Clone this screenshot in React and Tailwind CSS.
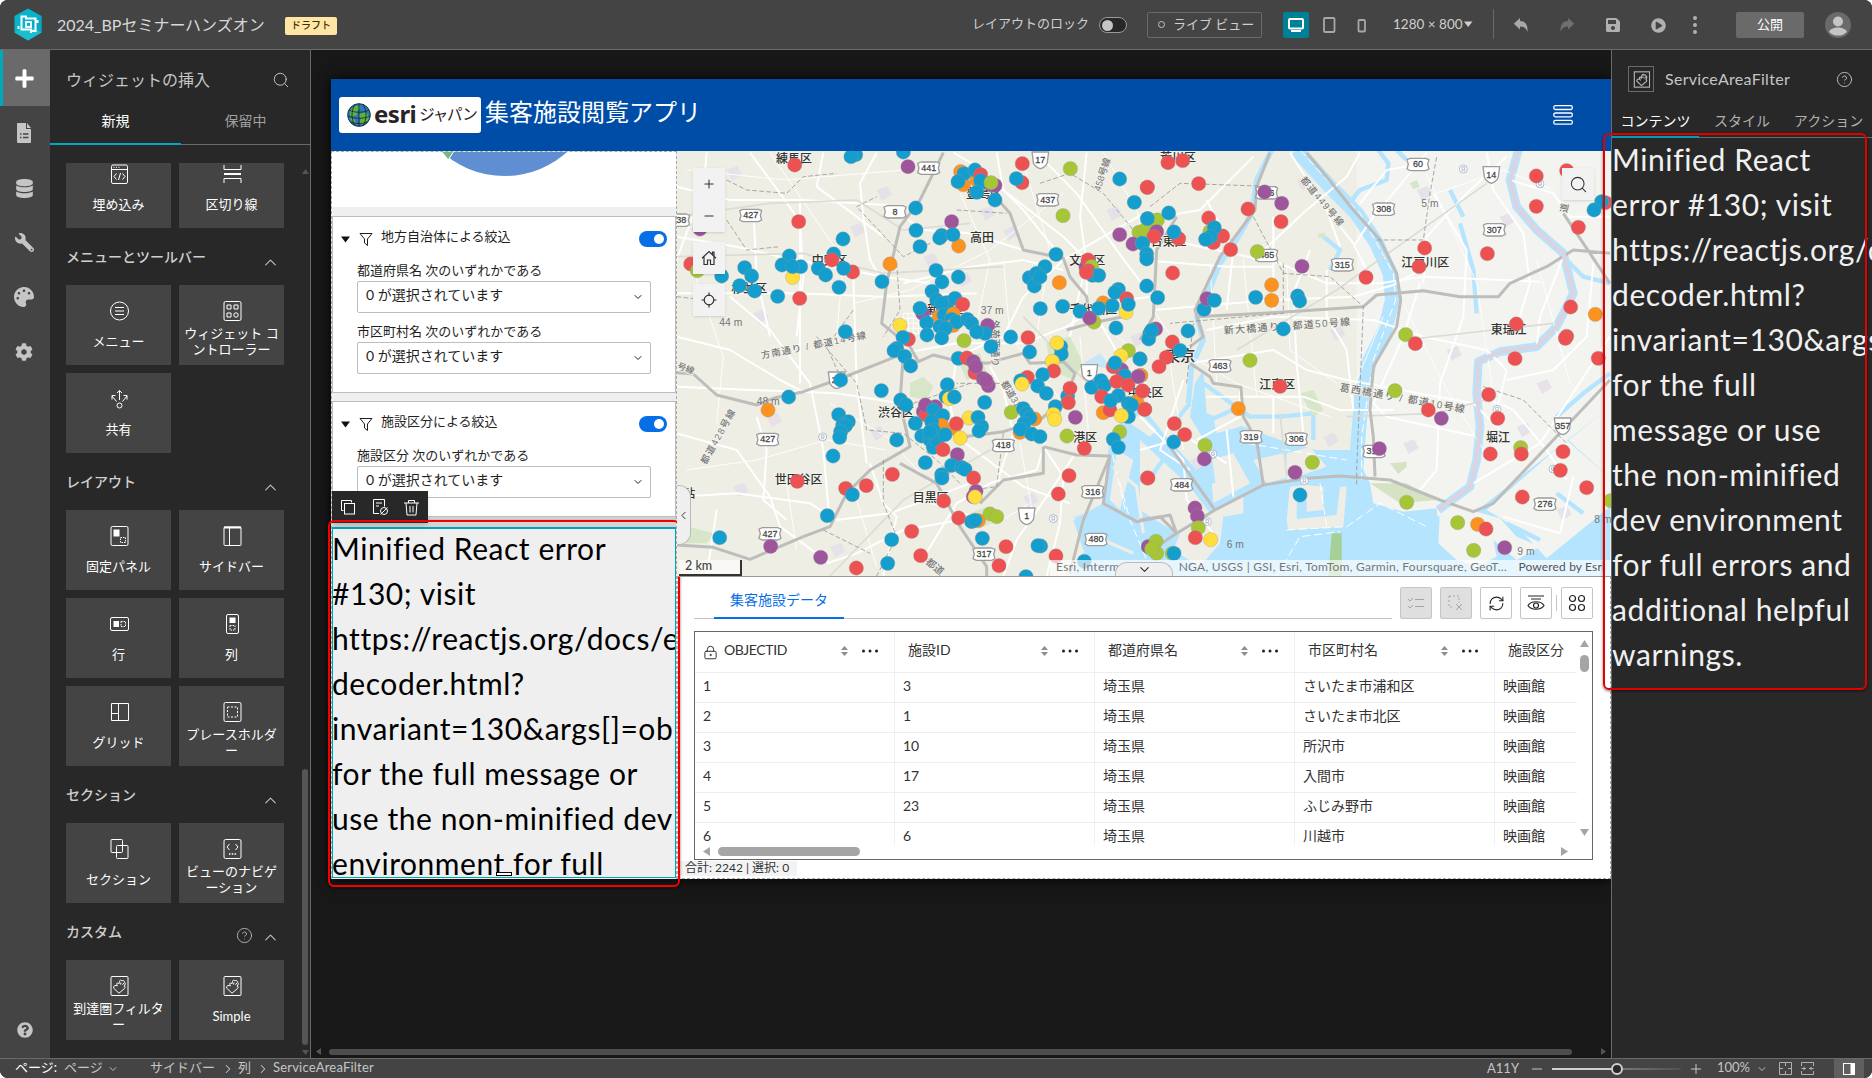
import React from "react";
import {
  Search, Plus, Minus, ChevronUp, ChevronDown, ChevronRight, ChevronLeft, CircleHelp, House, Locate,
  RefreshCw, LockKeyhole,
} from "lucide-react";
import { FaWrench, FaPalette, FaDatabase, FaCog, FaQuestionCircle, FaPlus, FaPlayCircle, FaSave } from "react-icons/fa";

/* ---------- shared icon helpers ---------- */
const Svg = ({ s = 20, className = "", children, sw = 1 }) => (
  <svg width={s} height={s} viewBox={`0 0 ${s} ${s}`} fill="none" stroke="currentColor" strokeWidth={sw} className={className}>{children}</svg>
);
const Hand = () => (
  <path d="M4.500 12L10 17.200L12 15.500L15.500 12.500C16.800 11.300 16 10 15 10.500C16.500 8.500 16.800 6.500 15.500 6.200C15.300 4.500 14 4 13 5C12.300 3.800 10.500 4 10.500 5.500L9.800 8C9 6.500 7.500 6.800 7.800 8.300L8.300 10C7 8.800 4.200 9.500 4.500 12zM11.500 8.500L12 6.500M13.500 8.800L15 6.800" />
);

const icons = {
  embed: <Svg><rect x="2.500" y="1" width="16" height="18.500" rx="1.500" /><path d="M2.500 5.500h16M4.500 3.300h1M7 3.300h1M9.500 3.300h1M7.500 9.500l-2.500 3 2.500 3M13.500 9.500l2.500 3-2.500 3M11.500 9l-2 7" /></Svg>,
  divider: <Svg><path d="M2 1v4.500h17V1M2 19v-4.500h17V19" /><path d="M2 10h17" strokeWidth="2" /></Svg>,
  menu: <Svg><circle cx="10.500" cy="10" r="9" /><path d="M6 6.500h9M6 10h9M6 13.500h9" /></Svg>,
  controller: <Svg><rect x="2" y=".5" width="17" height="19" rx="1.500" /><path d="M5 4h4v4H5zM12 4h4v4h-4zM5 12h4v4H5z" /><circle cx="14" cy="14" r="2.200" /></Svg>,
  share: <Svg><circle cx="10.500" cy="16.500" r="2.500" /><path d="M10.500 11V1.500M8 4l2.500-2.500L13 4M7.500 12.500L3 7M3 10.500V6.500h3.500M13.500 12.500L18 7M18 10.500V6.500h-3.500" /></Svg>,
  fixed: <Svg><rect x="2" y=".5" width="17" height="19" rx="1.500" /><rect x="5" y="4" width="5" height="6" fill="currentColor" /><rect x="11.500" y="11.500" width="5" height="5" strokeDasharray="1.500 1" /></Svg>,
  sidebar: <Svg><rect x="2" y="1" width="17" height="18.500" rx="1" /><path d="M2 1.500h17" strokeWidth="2" /><path d="M7.500 1v18" /></Svg>,
  row: <Svg><rect x="1.500" y="3.500" width="18" height="13" rx="1.500" /><rect x="5" y="7.500" width="4.500" height="5" fill="currentColor" /><rect x="12" y="7.500" width="4.500" height="5" strokeDasharray="1.500 1" /></Svg>,
  col: <Svg><rect x="4.500" y=".5" width="12" height="19" rx="1.500" /><rect x="8" y="4" width="5" height="4.500" fill="currentColor" /><rect x="8" y="11.500" width="5" height="4.500" strokeDasharray="1.500 1" /></Svg>,
  grid: <Svg><path d="M2.500 1.500h17v17h-17zM9.500 1.500v17M2.500 11.500h7" /></Svg>,
  placeholder: <Svg><rect x="2" y=".5" width="17" height="19" rx="1.500" /><rect x="5.500" y="5" width="10" height="10" strokeDasharray="2 1.500" /></Svg>,
  section: <Svg><rect x="2" y=".5" width="11.500" height="13" rx="1" /><rect x="7.500" y="6.500" width="11.500" height="13" rx="1" /></Svg>,
  viewnav: <Svg><rect x="2" y=".5" width="17" height="19" rx="1.500" /><path d="M7.500 5L5 8l2.500 3M13.500 5L16 8l-2.500 3" /><path d="M7 15h1.500M9.800 15h1.500M12.600 15h1.500" strokeWidth="1.500" /></Svg>,
  hand: <Svg><rect x="2" y=".5" width="17" height="19" rx="1" /><Hand /></Svg>,
};

const Logo = () => (
  <svg width="28" height="33" viewBox="0 0 28 33">
    <path d="M14 .5L27.500 8v16.500L14 32.500.5 24.500V8z" fill="#08b4cc" />
    <path d="M14 16.500L27.500 24.500 14 32.500.5 24.500z" fill="#2ac6cf" opacity=".55" />
    <path d="M27.500 8v16.500L14 16.500z" fill="#05a2c0" opacity=".7" />
    <path d="M11 8.500H7.500V21.500H17v3.500M12 7.500v3h9.500V23h-3.500M4.500 18v3M23.500 12v3" fill="none" stroke="#fff" strokeWidth="2" />
    <rect x="12" y="14" width="5" height="5" fill="none" stroke="#fff" strokeWidth="1.800" />
  </svg>
);

/* ---------- top bar ---------- */
const TopBar = () => (
  <header className="flex h-[50px] shrink-0 items-center border-b border-[#6a6a6a] bg-[#444444] pb-px text-[#cfcfcf]">
    <div className="ml-[14px] w-[43px]"><Logo /></div>
    <div className="mt-[2px] w-[228px] whitespace-nowrap text-[16px] text-[#d8d8d8]">2024_BPセミナーハンズオン</div>
    <div className="mt-[3px] flex h-[18px] w-[52px] items-center justify-center rounded-[2px] bg-[#ffe6a3] pb-px text-[10px] font-medium text-[#3a2f10]">ドラフト</div>
    <div className="mb-px ml-[635px] w-[127px] whitespace-nowrap text-[13px]">レイアウトのロック</div>
    <div className="mt-[2px] flex h-4 w-7 items-center rounded-full border border-[#999] bg-[#282828] pl-[2px]"><span className="h-[11px] w-[11px] rounded-full bg-[#c5c5c5]" /></div>
    <div className="ml-5 mt-[2px] flex h-[26px] w-[115px] items-center whitespace-nowrap rounded-[2px] border border-[#6a6a6a] pb-px pl-[10px] text-[13px]">
      <span className="mr-[8px] h-[7px] w-[7px] rounded-full border border-[#c5c5c5]" />ライブ ビュー
    </div>
    <div className="ml-[21px] mt-px flex h-[26px] w-[26px] items-center justify-center rounded-[2px] bg-[#007f99] text-white">
      <Svg s={16} sw={2}><rect x="1" y="2" width="14" height="9.500" rx="1" /><path d="M3 14h10" /></Svg>
    </div>
    <Svg s={16} sw={1.800} className="ml-[12px] mt-[2px] text-[#a8a8a8]"><rect x="3" y="1" width="10.500" height="14" rx="1" /></Svg>
    <Svg s={16} sw={1.800} className="ml-[17px] mt-[2px] text-[#a8a8a8]"><rect x="4.500" y="3" width="6.500" height="11.500" rx="1" /></Svg>
    <div className="ml-[23px] flex w-[100px] items-center whitespace-nowrap text-[13.500px]">1280 × 800<svg width="10" height="7" className="ml-[1px]"><path d="M0 .5h8.500L4.200 6z" fill="currentColor" /></svg></div>
    <div className="h-[30px] w-px bg-[#6a6a6a]" />
    <svg width="16" height="16" viewBox="0 0 16 16" className="ml-[19px] mt-px text-[#a8a8a8]"><path d="M7 1v3c5.500.3 8 4 7.500 11C13 11 11 9.500 7 9.500V12.500L.8 6.700z" fill="currentColor" /></svg>
    <svg width="16" height="16" viewBox="0 0 16 16" className="ml-[30px] mt-px text-[#6f6f6f]"><path d="M9 1v3C3.500 4.300 1 8 1.500 15 3 11 5 9.500 9 9.500V12.500l6.200-5.800z" fill="currentColor" /></svg>
    <FaSave size={16} className="ml-[30px] mt-[2px] text-[#b0b0b0]" />
    <FaPlayCircle size={15} className="ml-[30px] mt-[2px] text-[#b0b0b0]" />
    <div className="ml-[27px] mt-[2px] flex w-[4px] flex-col gap-[3px]">{[0, 1, 2].map((i) => <span key={i} className="h-[4px] w-[4px] rounded-full bg-[#b0b0b0]" />)}</div>
    <div className="ml-[39px] mt-[2px] flex h-[26px] w-[68px] items-center justify-center rounded-[2px] bg-[#6a6a6a] pb-px text-[13px] text-white">公開</div>
    <svg width="26" height="26" viewBox="0 0 26 26" className="ml-[21px] mt-[2px]"><circle cx="13" cy="13" r="13" fill="#6a6a6a" /><circle cx="13" cy="9.500" r="5" fill="#c5c5c5" /><path d="M4 20c2-6 16-6 18 0a13 13 0 0 1-18 0z" fill="#c5c5c5" /></svg>
  </header>
);

/* ---------- left rail and widget panel ---------- */
const Rail = () => (
  <nav className="flex w-[50px] shrink-0 flex-col items-center bg-[#444444] text-[#c5c5c5]">
    <div className="flex h-[56px] w-full items-center justify-center border-l-[3px] border-[#00aabb] bg-[#6a6a6a] pr-[5px] text-white"><FaPlus size={21} /></div>
    <svg width="14" height="20" viewBox="0 0 14 20" className="mr-[2px] mt-[17px]"><path d="M1 0h8v6h5v13a1 1 0 0 1-1 1H1a1 1 0 0 1-1-1V1a1 1 0 0 1 1-1zM10 0l4 5h-4z" fill="currentColor" /><path d="M3 11h1.500M6 11h5.500M3 14.500h1.500M6 14.500h5.500" stroke="#444" strokeWidth="1.500" /></svg>
    <FaDatabase size={19} className="mr-[2px] mt-[36px]" />
    <FaWrench size={19} className="mr-[2px] mt-[35px] -scale-x-100" />
    <FaPalette size={20} className="mr-[2px] mt-[35px]" />
    <FaCog size={18} className="mr-[2px] mt-[36px]" />
    <div className="grow" />
    <FaQuestionCircle size={16} className="mb-[20px]" />
  </nav>
);

const Tile = ({ icon, lines }) => (
  <div className="flex h-[80px] w-[105px] flex-col items-center bg-[#444444] pt-4 text-white">
    {icons[icon]}
    <div className="mt-[4px] flex h-[32px] flex-col justify-center whitespace-nowrap text-center text-[13px] leading-[16px]">
      {lines.map((l) => <div key={l}>{l}</div>)}
    </div>
  </div>
);
const Group = ({ title, help, tiles }) => (
  <section>
    {title && (
      <div className="flex h-[57px] items-center pr-[4px]">
        <h3 className="grow text-[14px] font-medium text-[#cfcfcf]">{title}</h3>
        {help && <CircleHelp size={17} strokeWidth={1.300} className="mr-[8px] mt-[8px] text-[#b5b5b5]" />}
        <ChevronUp size={19} strokeWidth={1.300} className="mt-[12px] text-[#c5c5c5]" />
      </div>
    )}
    <div className="grid grid-cols-[105px_105px] gap-2">{tiles.map(([icon, ...lines]) => <Tile key={lines[0]} icon={icon} lines={lines} />)}</div>
  </section>
);
const WidgetPanel = () => (
  <aside className="flex w-[261px] shrink-0 flex-col border-r border-[#6a6a6a] bg-[#282828]">
    <div className="flex h-[60px] shrink-0 items-center justify-between pl-4 pr-[20px] text-[16px] text-[#c5c5c5]">ウィジェットの挿入<Search size={18} strokeWidth={1.300} /></div>
    <div className="flex h-[35px] shrink-0 text-center text-[14px] leading-[21px]">
      <div className="w-[131px] border-b-2 border-[#00aabb] text-white">新規</div>
      <div className="grow border-b border-[#6a6a6a] text-[#a0a0a0]">保留中</div>
    </div>
    <div className="flex grow">
      <div className="ml-4 mt-[18px] w-[218px]">
        <div className="overflow-hidden"><div className="-mt-[15px]"><Group tiles={[["embed", "埋め込み"], ["divider", "区切り線"]]} /></div></div>
        <Group title="メニューとツールバー" tiles={[["menu", "メニュー"], ["controller", "ウィジェット コ", "ントローラー"], ["share", "共有"]]} />
        <Group title="レイアウト" tiles={[["fixed", "固定パネル"], ["sidebar", "サイドバー"], ["row", "行"], ["col", "列"], ["grid", "グリッド"], ["placeholder", "プレースホルダ", "ー"]]} />
        <Group title="セクション" tiles={[["section", "セクション"], ["viewnav", "ビューのナビゲ", "ーション"]]} />
        <Group title="カスタム" help tiles={[["hand", "到達圏フィルタ", "ー"], ["hand", "Simple"]]} />
      </div>
      <div className="ml-[17px] flex w-[8px] flex-col items-center pt-[24px] text-[#555]">
        <svg width="7" height="5"><path d="M3.500 0L7 5H0z" fill="currentColor" /></svg>
        <div className="mt-[595px] h-[276px] w-[6px] rounded-full bg-[#555]" />
        <svg width="7" height="5" className="mt-[5px]"><path d="M3.500 5L7 0H0z" fill="currentColor" /></svg>
      </div>
    </div>
  </aside>
);

/* ---------- map ---------- */
const COLORS = { B: "#149ece", R: "#ed5151", G: "#a7c636", P: "#9e559c", O: "#fc921f", Y: "#ffde3e" };
const west = `P90 237;R62 342;G82 362;R374 45;B557 14;B543 20;B700 6;P714 50;B737 174;R386 215;B738 241;B750 290;B519 267;P845 215;O866 288;B815 256;B809 264;B849 254;O660 342;B636 395;B155 378;B224 353;B245 378;B209 407;B254 423;B323 439;R389 445;B358 318;B336 345;Y368 382;B392 350;B368 350;B491 312;R486 330;B445 355;B467 375;R548 366;B521 355;B507 412;B526 545;Y690 526;R715 568;B699 562;B680 595;B672 602;B704 619;B722 648;B512 690;B356 741;O294 780;B634 722;B692 750;B708 765;B506 794;B535 815;B518 825;B526 828;B512 845;B509 862;B489 918;B680 870;
O872 65;O880 104;O920 90;B882 71;B864 95;B915 60;R932 74;P965 105;P975 106;B935 96;B932 92;G963 98;B920 127;B975 150;R1057 41;R1056 98;B1039 86;G1201 56;G1179 197;B1349 87;R1432 112;B1393 157;P1349 254;G1407 247;P1389 282;B1434 206;B1417 279;B1158 313;B1125 350;B1078 383;B1100 370;B1093 408;B1110 381;O1168 398;P1248 352;R1254 330;G1265 350;R1255 362;B1268 376;B1286 376;R1249 367;B1111 476;B1178 469;B1230 484;G1272 516;P1259 504;O1299 459;B1286 475;B1327 467;Y1368 487;B1345 418;B1335 427;R1370 446;B1375 463;B1338 534;
B798 361;B865 381;B816 396;B786 424;P758 490;B750 475;O808 500;B800 450;B830 458;B815 460;B855 445;R878 463;B822 495;O850 492;B770 518;B810 530;B845 508;O850 526;B860 516;B826 535;B771 555;B815 564;B892 508;B905 520;P953 526;B945 550;B920 546;B963 590;B1022 561;G882 572;B865 625;R915 668;R891 624;P910 635;P917 650;P940 686;P955 707;P948 692;B832 704;B828 740;Y838 746;B853 741;B944 757;Y897 804;B924 802;B935 830;B927 843;
P760 785;P796 770;R768 795;P766 765;B790 780;B818 797;O815 826;B736 820;O852 835;R859 821;B785 815;B790 840;B755 858;B780 870;B790 892;B802 872;B780 845;B825 854;R819 899;Y871 864;P862 914;B766 938;B845 946;B875 952;B885 958;B815 974;B816 984;R911 984;P918 1024;P910 1040;Y915 1041;R667 973;R382 994;R527 1015;B547 1034;R589 1007;B472 1097;B149 1163;P302 1189;P452 1222;R559 1254;B665 1169;B653 1240;R725 1144;R752 1217;R821 1053;R866 1104;O925 1112;B905 1115;B915 1111;G960 1092;G980 1100;B937 1165;R1008 1190;R987 1247;B1068 1280;B1112 1188;B1104 1187;R1158 1218;B1243 1234;R1243 895;R1165 1032;R1197 977;R1432 984;
R1074 563;B1079 606;B1172 590;B1174 612;Y1161 579;Y1147 634;R1151 663;B1118 674;R1072 682;B1052 692;Y1056 702;B1103 708;B1129 730;B1193 738;R1200 715;R1195 758;B1156 770;Y1150 793;Y1154 808;P1216 802;G1191 858;G1024 787;O1094 807;O1050 847;B1060 776;B1070 790;B1080 804;B1062 820;B1051 838;B1085 852;B1110 860;
G1375 602;Y1353 617;B1410 627;P1355 660;R1330 650;B1335 639;B1365 678;O1412 677;P1404 680;B1265 712;B1293 692;B1303 706;R1295 740;R1340 695;R1374 705;R1417 723;O1300 788;R1320 780;R1424 778;B1345 737;O1400 755;B1375 760;B1322 752;B1385 765;B1375 800;Y1354 797;G1349 846;B1330 868;B1345 892;P1436 1190`;
const east = `R84 38;R128 32;R22 112;R176 101;P374 126;P425 160;R423 215;R324 177;R206 204;G15 240;G45 225;G52 210;B86 189;B22 206;P50 245;R42 259;R116 266;B102 246;G210 245;R220 278;R248 258;B223 233;B212 260;B197 268;R272 299;B8 280;B20 312;B20 327;R98 369;G352 305;P486 349;O395 405;O395 451;B347 442;B473 438;B479 453;B20 408;B53 443;B192 478;P201 446;B223 451;B430 537;P47 537;B30 550;B26 567;B35 541;B144 543;R97 576;B120 601;R79 622;R57 650;B0 627;O2 676;P-5 679;R8 723;R14 778;O295 776;G330 631;R420 709;R103 821;R134 854;B101 876;G195 886;P193 927;R24 984;P165 1074;P172 1098;G175 1133;R166 1163;Y212 1169;P25 1190;G48 1174;G50 1210;G35 1197;G97 1210;B102 1210;P465 967;G517 937;B480 1035;R678 382;R854 294;R837 350;R1042 311;R1189 78;R1189 169;R1280 62;R1396 158;B1385 155;B1362 180;R1315 232;R1292 471;O1366 493;R1129 522;G797 554;R826 581;R1280 559;R1276 565;R1125 626;R1375 625;G765 722;R1046 734;R865 780;P904 805;R1073 805;P718 896;R1051 912;G1142 893;R1144 912;R1269 905;R1261 961;R1340 1013;R1147 1041;G800 1057;G953 1118;O1013 1123;R1038 1137;G1001 1201;P1094 1193;G1412 1052`;
const parse = (s) => s.replace(/\n/g, "").split(";").map((d) => { const [x, y] = d.slice(1).split(" "); return [COLORS[d[0]], +x, +y]; });
const Dots = ({ data }) => parse(data).map(([c, x, y], i) => <circle key={i} cx={x} cy={y} r="21.500" fill={c} stroke="#99999988" strokeWidth="2" />);

const NATIONAL = ["17", "20", "1", "14", "357"];
const Shield = ({ x, y, t }) => (
  <g>
    <path d={NATIONAL.includes(t) ? `M${x - 25} ${y - 24}h50q-4 30 -4 32q-6 14 -21 18q-15 -4 -21 -18q0 -4 -4 -32z` : `M${x - 33} ${y - 14}l10 -4h46l10 4l-4 14l4 14l-10 5h-46l-10 -5l4 -14z`} fill="#fff" stroke="#9c9c9c" strokeWidth="4" />
    <text x={x} y={y + 9} fontSize="27" textAnchor="middle" fill="#444" stroke="#444" strokeWidth=".8">{t}</text>
  </g>
);
const Place = ({ x, y, s = 36, children, r = 0, c = "#333", ls = 0 }) => (
  <text x={x} y={y} fontSize={s} fill={c} stroke="#f4f4ee" strokeWidth="5" paintOrder="stroke" fontWeight="500" letterSpacing={ls} transform={r ? `rotate(${r} ${x} ${y})` : undefined}>{children}</text>
);

const whiteRoads = [
  "M20 110L180 150L400 150L650 165L760 240L900 250L1060 300", "M110 8L100 120L60 220L20 330", "M20 260L200 290L330 320L640 380L780 400",
  "M390 150L390 700", "M240 8L330 130L390 215L400 380L380 560", "M20 430L380 430L640 440L920 430", "M20 560L180 600L330 690L400 725",
  "M460 8L440 110L560 200L640 260", "M620 8L570 100L580 200L600 330L640 400", "M20 710L250 720L500 730L690 760", "M180 440L300 540L420 700L460 900L480 1130",
  "M250 180L260 380L300 560", "M980 8L1000 120L1180 260L1250 330L1250 450L1350 620", "M1100 8L1220 130L1340 300L1430 420", "M850 8L940 60L1060 180L1180 330",
  "M1250 8L1230 200L1250 340L1220 460L1200 560", "M1440 180L1300 260L1180 330L1060 440L1000 560L860 620", "M700 400L900 350L1060 330L1180 360",
  "M700 610L860 580L1060 580L1190 530L1300 460L1440 440", "M860 620L840 760L860 860L1060 1010L1200 1060", "M20 850L200 900L300 1040L330 1130L480 1240",
  "M20 1040L200 1030L420 1060L500 1110L660 1090L900 1000", "M140 1080L110 1278", "M600 940L640 1060L680 1100L640 1278", "M750 1240L860 1060L960 1000L1100 960L1130 860",
  "M1000 1278L1040 1170L1130 1040L1210 920", "M470 1240L560 1210L700 1140L870 1110", "M260 800L290 900L280 1050L350 1110", "M550 380L560 700L590 940", "M1120 890L1180 980L1170 1120L1130 1278", "M960 650L1000 720L1030 850L980 1000",
];
const eastRoads = [
  "M0 210L180 180L340 20", "M50 260L180 290L420 340L560 400L720 400L850 380L1200 395", "M200 150L280 300L260 480", "M0 330L260 350L400 350", "M40 480L400 450L640 440L760 405L860 350",
  "M400 200L400 480", "M510 300L460 430L470 640L490 850", "M560 360L560 500L620 600L640 780", "M200 540L400 500L700 510L850 560L1040 600L1100 660L1070 780", "M150 640L400 600L500 660L620 690L1000 760L1100 860",
  "M200 740L490 740L600 780L760 780", "M840 400L790 560L700 760L740 800L1000 857", "M860 8L760 130L700 200L640 290", "M660 8L620 80L500 180L340 330", "M1100 20L980 130L860 260L850 400", "M880 130L980 300L970 500L900 700L890 960L840 1020",
  "M1040 8L1060 120L1150 250L1170 400L1120 560", "M1110 90L1240 130L1290 200L1410 200", "M860 40L740 60L660 160", "M1270 320L1200 500L1190 590", "M1360 340L1340 560L1240 660L1100 690", "M1030 740L1120 780L1220 900L1280 990", "M1000 1000L1200 880L1410 560", "M1090 1100L1260 1150L1300 980",
  "M0 800L130 930L140 1050L220 1150", "M130 690L60 900L150 960", "M260 840L280 1040", "M300 720L300 800L170 870", "M400 740L400 850", "M0 900L140 860L260 940", "M560 180L600 290", "M450 8L560 180L640 280L700 400",
];

const MapView = () => (
  <div className="relative h-[426px] w-full overflow-hidden border-b border-[#999]">
    <svg width="934" height="426" viewBox="0 0 934 426" fontFamily="'Liberation Sans','Noto Sans CJK JP',sans-serif">
      <rect width="934" height="426" fill="#efeee4" />
      <g transform="translate(-7 -1) scale(.33333)" fill="none" strokeLinejoin="round">
        <g transform="translate(1410 0)">
          <path d="M650 0H1410V1290H650z" fill="#f3f4ef" />
          <path d="M-90 850L-30 790L0 760L70 850L170 960L210 900L150 800L165 700L190 660L200 790L310 830L420 870L530 900L640 900L690 1000L700 1060L790 1085L890 1075L900 1180L960 1270L1410 1280H-90L-170 1200L-200 1110L-110 1060z" fill="#b5e4ff" />
          <path d="M1410 770L1285 870L1410 985V1280H890V1100L1000 1090z" fill="#b5e4ff" />
          <path d="M1040 1080L1280 870L1410 985V1070L1220 1225L1150 1150L1090 1110zM900 1080L1010 1085L1080 1105L1130 1160L1200 1190L1130 1230L1060 1170L1070 1220L1010 1250L950 1230L895 1180z" fill="#f3f4ef" />
          <g fill="#efeee6">
            <path d="M0 870L150 1010L210 1090L110 1150L0 1080zM210 930L280 910L330 1000L220 1060zM340 930L430 910L450 980L380 1000zM440 910L510 890L560 950L440 990zM620 1010L610 1130L445 1140L440 1110L590 1095L600 1010zM500 1005L550 1010V1080L500 1085V1050L470 1055V1110L440 1110L450 1010z" />
            <path d="M310 1035L310 1090L250 1100L240 1180L180 1250L100 1200L120 1150L225 1080zM220 800L310 780L300 830L230 850zM340 790L460 770L480 830L360 840zM0 790L50 840L30 860L-30 820zM-70 900L-20 930L-60 1080L-90 1050z" />
          </g>
          <path d="M690 1000L800 1000L890 1050L780 1060zM750 940L800 935L800 950L775 972z" fill="#d5e3c4" />
          <path d="M575 1150L605 1150V1280H565z" fill="#a6d096" />
          <g stroke="#b5e4ff">
            <path d="M470 0L570 110L650 190L710 280L750 370L757 450L735 540L690 630L665 740L655 860L645 1000" strokeWidth="44" />
            <path d="M395 0L350 90L335 190L290 270L240 340L200 440L170 500L190 570L155 650L145 760" strokeWidth="16" />
            <path d="M715 0L745 40L740 90L660 120L635 150M770 0L800 30M930 120L970 200M960 220L1000 360L1010 490M190 700L330 800L420 800L520 790V870M150 760L100 820M1270 320L1330 380L1410 400M1410 670L1330 730L1250 800M550 260L600 300L570 360M0 850L100 940M20 1000L90 900M200 860L220 1000M210 810L300 770M1100 1120L1200 1170M1250 1030L1330 1090" strokeWidth="13" />
            <path d="M1135 0L1110 90L1130 170L1190 240L1270 310L1300 430L1250 530L1190 590L1080 605L1015 635L1010 730L1020 830L1010 930L990 1010L895 1080" strokeWidth="26" />
          </g>
          <g stroke="#fff" strokeWidth="3" strokeDasharray="24 12"><path d="M480 0L580 110L660 190L760 370L767 450L700 630L665 860V990M-60 1000L-30 1110L20 1230M440 1140L620 1130L720 1060L860 1130M540 1000L560 1130M-90 880L-40 1100M320 880L620 930M410 1278L480 1160L600 1145" /></g>
        </g>
        <path d="M1210 1100L1290 1080L1300 1110L1240 1130zM1250 1190L1310 1150L1400 1200V1278H1200zM1240 640L1290 610L1330 660" fill="#b5e4ff" opacity=".7" />
        <g stroke="#efeee6" strokeWidth="10"><path d="M1330 950L1400 1010L1420 1150M1300 1170L1390 1210" /></g>
        <g fill="#d7e5c8">
          <path d="M720 700L760 680L790 710L770 750L720 740zM1130 580L1200 560L1240 640L1210 690L1140 660zM20 1120L130 1150L110 1180H20zM860 620l70 -10l20 60l-60 20zM100 310l60 10l-10 30zM1890 730l40 -10l30 60l-30 20zM2220 100l20 -10l10 20l-20 8zM1945 250h20v14h-20zM900 1090l50 -20l40 40l-50 20z" />
        </g>
        <g fill="#e5deea" opacity=".8">
          {[[170, 60], [290, 800], [540, 230], [600, 840], [250, 490], [190, 1010], [760, 320], [860, 380], [1000, 240], [1310, 180], [1060, 1040], [1240, 700], [1600, 230], [1880, 90], [1960, 860], [2600, 700], [2540, 830], [2660, 1080], [2330, 600], [2240, 120], [2490, 200], [930, 180], [620, 120], [1380, 560], [480, 1190], [1560, 930], [1980, 540], [2200, 880]].map(([x, y], i) => <path key={i} d={`M${x} ${y}l32 -12l14 26l-30 18z`} />)}
        </g>
        <g stroke="#fff" strokeWidth="6">
          {whiteRoads.map((d) => <path key={d} d={d} />)}
          <g transform="translate(1410 0)">{eastRoads.map((d) => <path key={d} d={d} />)}</g>
          <path d="M700 490h60v60h-60zM715 490v60M730 490v60M745 490v60M700 505h60M700 520h60M700 535h60" strokeWidth="3" />
        </g>
        <g stroke="#fff" strokeWidth="3" opacity=".9">
          <path d="M50 60L350 90L700 60M60 330L160 620L140 820M300 8L520 330L500 560M550 460L720 420L960 300L1180 130M870 130L960 330L920 520M1000 330L1020 560L1180 760M1060 40L1140 300L1100 560M480 760L650 860L780 1000M50 960L260 930L470 870L650 900M350 1000L380 1200M560 1050L620 1250M750 1050L980 1120L1080 1060M1050 880L1090 1100M1250 500L1400 600L1440 760M1230 560L1260 900M1300 8L1400 180L1440 340M1450 480L1530 600L1700 700L1980 800M1500 640L1540 900M1620 340L1640 700M1720 330L1760 740M1850 350L1860 600L2000 700M2040 740L2140 500M2200 460L2320 700L2440 900M2260 50L2420 400L2480 800M2600 330L2700 700M2300 130L2500 60L2650 120" />
        </g>
        <g stroke="#dcdcd6" strokeWidth="5"><path d="M20 200L300 160L560 150L700 240L900 220M20 320L400 310L640 370L1000 350M480 1278L700 1050L960 900M1060 500L1300 750M2450 100L2000 420L1700 600M2200 570L2650 520M2030 800L2300 790L2480 740M1830 790L1850 980" /></g>
        <g stroke="#bdbdbb" strokeWidth="9">
          <path d="M820 8L750 150L690 230L650 400L635 520L720 590L745 635L790 615L850 630L950 640L1060 610L1080 640L1180 635L1215 670L1190 740L1110 810L1000 845L870 862" />
          <path d="M20 668L70 672L140 735L260 765L310 745L400 725L500 690L640 635L700 610L690 760L720 890L600 960L530 1030L480 1130L400 1160L240 1228L130 1192L20 1185" />
          <path d="M690 940L800 1000L870 1130L950 1250V1278M940 100L1020 190L1060 300L1180 325L1200 380L1250 440L1260 520M1120 890L1220 915L1320 918L1300 1060L1400 1115L1500 1095L1520 1150M1120 890V970L1000 990L930 1060M1190 540L1260 520L1360 500M1320 918L1240 1110L1200 1270" />
          <g transform="translate(1410 0)">
            <path d="M500 8L560 80L640 180L720 270L770 370L782 450L770 530L700 650L690 780L700 860L705 980M50 1190L110 1150L225 1080L370 1005L500 985L600 978L750 990L900 1050L1000 1085L1060 1060L1240 870L1410 690M170 500L400 488L670 470L710 435L850 422L960 440L1075 440L1110 400L1220 350L1300 300L1410 310M90 890L225 1080M150 640L210 680L220 700L303 712L310 800L350 870L370 1005M110 200L50 300L40 500L0 570M390 8L350 110L345 180L240 320L165 480L190 560L150 590M0 1110L60 1100L110 1150M1270 190L1330 280L1410 400" />
          </g>
        </g>
        <path d="M2545 0L2520 90L2540 170L2600 240L2680 310L2710 430L2660 530L2600 590L2490 605L2425 635L2420 730L2430 830L2420 930L2400 1010L2305 1080" stroke="#dcd3df" strokeWidth="13" />
        <g stroke="#999994" strokeWidth="2.500" strokeDasharray="14 7">
          <path d="M170 90L230 120L350 130L400 80L500 70M170 210L230 300L330 290M440 560L560 700L590 840L700 850L800 930L870 1000M550 480L470 590L520 700M680 340L690 480L640 560M780 280L700 320L560 170L620 140M20 440L110 450M640 930L640 1060L680 1160L620 1278M860 180L1010 190M1110 100L1200 70L1300 130L1390 240M990 700L860 700M1000 850L980 1010L900 1020M730 760L900 700M460 1140L600 1210M1440 170L1530 100L1820 110M1750 200L1840 370L1980 380L2080 470L2060 960V1010M2120 270L2260 270L2280 130L2300 20M1840 340V490L1500 520M1570 520L1550 700M2440 710L2560 750L2690 880" />
        </g>

        <Place x={318} y={40}>練馬区</Place><Place x={425} y={344}>中野区</Place><Place x={184} y={430}>杉並区</Place><Place x={888} y={145}>豊島区</Place>
        <Place x={900} y={276}>高田</Place><Place x={1198} y={344}>文京区</Place><Place x={772} y={492}>新宿区</Place><Place x={1198} y={492}>千代田区</Place>
        <Place x={624} y={801}>渋谷区</Place><Place x={314} y={1001}>世田谷区</Place><Place x={728} y={1056}>目黒区</Place><Place x={1210} y={876}>港区</Place>
        <Place x={40} y={1044}>砧</Place><Place x={1470} y={36}>荒川区</Place><Place x={1442} y={289}>台東区</Place><Place x={1486} y={634} s={45}>東京</Place><Place x={1373} y={741}>中央区</Place>
        <Place x={2194} y={351}>江戸川区</Place><Place x={1768} y={718}>江東区</Place><Place x={2462} y={552}>東瑞江</Place><Place x={2448} y={877}>堀江</Place>
        <g>
          <Place x={275} y={626} s={28} r={-11} c="#777" ls={3.500}>方南通り / 都道14号線</Place>
          <Place x={1662} y={552} s={30} r={-4} c="#777" ls={4}>新大橋通り / 都道50号線</Place>
          <Place x={2008} y={722} s={30} r={10} c="#777" ls={4}>葛西橋通り / 都道10号線</Place>
          <Place x={108} y={945} s={28} r={-61} c="#777" ls={4}>都道428号線</Place>
          <Place x={1890} y={90} s={28} r={50} c="#777" ls={4}>都道449号線</Place>
          <Place x={1290} y={125} s={28} r={-72} c="#777">458号線</Place>
          <Place x={966} y={510} s={28} r={90} c="#777">外苑西通り</Place>
          <Place x={992} y={700} s={28} r={58} c="#777">都道319</Place>
          <Place x={765} y={1240} s={30} r={38} c="#777">都道</Place>
          <Place x={20} y={655} s={26} r={20} c="#777">号線</Place>
          <Place x={2690} y={190} s={28} r={-80} c="#777">道</Place>
        </g>
        <g fill="#777" fontSize="31"><text x="148" y="527">44 m</text><text x="260" y="765">48 m</text><text x="932" y="493">37 m</text><text x="2254" y="170">5 m</text><text x="1670" y="1193">6 m</text><text x="2542" y="1216">9 m</text><text x="2773" y="1118">8 m</text></g>
        {[[242, 196, "427"], [776, 54, "441"], [1111, 30, "17"], [1133, 149, "437"], [675, 185, "8"], [26, 210, "438"], [500, 690, "20"], [293, 868, "427"], [300, 1151, "427"], [1000, 886, "418"], [1258, 668, "1"], [1070, 1098, "1"], [1268, 1025, "316"], [1278, 1168, "480"], [942, 1212, "317"],
          [2244, 43, "60"], [2464, 74, "14"], [1790, 128, "446"], [2141, 177, "308"], [2473, 239, "307"], [1790, 316, "465"], [2017, 344, "315"], [1650, 647, "463"], [1743, 860, "319"], [1879, 867, "306"], [2112, 904, "318"], [1535, 1004, "484"], [2625, 1062, "276"], [2678, 828, "357"]].map(([x, y, t], i) => <Shield key={i} x={x} y={y} t={t} />)}
        {[[458, 861], [1150, 1106], [1903, 992], [1612, 1115], [2380, 57], [2481, 778], [1629, 912], [2649, 957], [2610, 102]].map(([x, y]) => <g key={x}><circle cx={x} cy={y} r="12" fill="#fff" stroke="#8fa0b5" strokeWidth="2" /><path d={`M${x - 4} ${y - 6}h8v9h-8zM${x - 5} ${y + 8}l3 -4M${x + 5} ${y + 8}l-3 -4`} stroke="#8fa0b5" strokeWidth="2" /></g>)}
        <Dots data={west} />
        <g transform="translate(1410 0)"><Dots data={east} /></g>
      </g>
    </svg>

    {/* map controls */}
    <div className="absolute left-[16px] top-[17px] flex w-8 flex-col bg-[#f2f2f2] text-[#333] shadow-sm">
      <div className="flex h-8 items-center justify-center"><Plus size={14} strokeWidth={1.800} /></div>
      <div className="flex h-8 items-center justify-center"><Minus size={14} strokeWidth={1.800} /></div>
    </div>
    <div className="absolute left-[16px] top-[91px] flex h-8 w-8 items-center justify-center bg-[#f2f2f2] text-[#333] shadow-sm">
      <Svg s={16} sw={1.200}><path d="M1 8.200L8 1.500l7 6.700M3 6.800V14.500h3.500v-4.500h3v4.500H13V6.800M11.500 4.500V2H13v4" /></Svg>
    </div>
    <div className="absolute left-[16px] top-[133px] flex h-8 w-8 items-center justify-center bg-[#f2f2f2] text-[#333] shadow-sm">
      <Svg s={16} sw={1.200}><circle cx="8" cy="8" r="4.800" /><path d="M8 .5v3.500M8 12v3.500M.5 8H4M12 8h3.500" /></Svg>
    </div>
    <div className="absolute left-[885px] top-[17px] flex h-8 w-8 items-center justify-center bg-[#f2f2f2] text-[#333] shadow-sm"><Search size={19} strokeWidth={1.300} /></div>
    <div className="absolute left-0 top-[334px] flex h-[60px] w-[14px] items-center rounded-r-xl border border-l-0 border-[#bbb] bg-[#efefef] text-[#333]"><ChevronLeft size={15} strokeWidth={1.800} /></div>
    <div className="absolute bottom-0 left-[2px] h-[16px] w-[63px] border-b-2 border-r-2 border-[#333] bg-white/60 pl-[6px] text-[12.500px] font-medium leading-[12px] text-[#444]">2 km</div>
    <div className="absolute bottom-0 left-[373px] flex h-[16px] w-[561px] items-center justify-between whitespace-nowrap bg-white/65 pb-[2px] pl-[6px] pr-[6px] text-[12px] text-[#777]">
      <span className="w-[120px] tracking-[0.300px]">Esri, Interma</span>
      <span className="w-[337px] tracking-[0.250px]">NGA, USGS | GSI, Esri, TomTom, Garmin, Foursquare, GeoT…</span>
      <span className="tracking-[0.150px] text-[#555]">Powered by Esri</span>
    </div>
    <div className="absolute bottom-0 left-[438px] flex h-[14px] w-[58px] items-center justify-center rounded-t-xl border border-b-0 border-[#bbb] bg-[#efefef] text-[#333]"><ChevronDown size={15} strokeWidth={1.800} /></div>
  </div>
);

/* ---------- data table ---------- */
const rows = [["1", "3", "さいたま市浦和区"], ["2", "1", "さいたま市北区"], ["3", "10", "所沢市"], ["4", "17", "入間市"], ["5", "23", "ふじみ野市"], ["6", "6", "川越市"]];
const SortDots = () => (
  <span className="ml-auto mr-[16px] mt-[2px] flex items-center gap-[14px]">
    <svg width="7" height="10"><path d="M3.500 0L7 4H0zM3.500 10L7 6H0z" fill="#888e95" /></svg>
    <svg width="16" height="4"><path d="M1.500 2h.01M8 2h.01M14.500 2h.01" stroke="#222" strokeWidth="3" strokeLinecap="round" /></svg>
  </span>
);
const ToolBtn = ({ off, children, className = "" }) => (
  <div className={`flex h-8 w-8 items-center justify-center rounded-[2px] border border-[#c5c5c5] ${off ? "bg-[#dfdfdf] text-[#a5a5a5]" : "bg-white text-[#222]"} ${className}`}>{children}</div>
);
const DataTable = () => (
  <div className="h-[302px] bg-white pl-[17px] text-[14px] text-[#333]">
    <div className="flex h-[54px] pt-[10px]">
      <div className="flex h-[32px] w-[698px] border-b border-[#c5c5c5]">
        <div className="ml-[20px] h-[32px] w-[130px] border-b-2 border-[#076fe5] text-center leading-[25px] text-[#076fe5]">集客施設データ</div>
      </div>
      <ToolBtn off className="ml-2"><Svg s={18}><path d="M1 5l2 2 3-3M8 5.500h9M1 12l2 2 3-3M8 12.500h9" /></Svg></ToolBtn>
      <ToolBtn off className="ml-2"><Svg s={18}><path d="M2 2h10v7M2 2v11h4" strokeDasharray="2 2" /><path d="M9 10l6 6M15 10l-6 6" /></Svg></ToolBtn>
      <ToolBtn className="ml-2"><RefreshCw size={17} strokeWidth={1.500} /></ToolBtn>
      <ToolBtn className="ml-2"><Svg s={18} sw={1.200}><path d="M1 2h16M4 5h10" /><path d="M1 11.500c3-5 13-5 16 0-3 5-13 5-16 0z" /><circle cx="9" cy="11.500" r="2.500" /></Svg></ToolBtn>
      <div className="ml-[4px] mr-[4px] mt-2 h-4 w-px bg-[#c5c5c5]" />
      <ToolBtn><Svg s={18} sw={1.200}><circle cx="4.500" cy="4.500" r="3" /><circle cx="13.500" cy="4.500" r="3" /><circle cx="4.500" cy="13.500" r="3" /><circle cx="13.500" cy="13.500" r="3" /></Svg></ToolBtn>
    </div>
    <div className="flex h-[229px] w-[899px] border border-[#666]">
      <div className="w-[882px]">
        <div className="h-[213px] overflow-hidden">
          <div className="grid h-[41px] grid-cols-[200px_200px_200px_200px_82px] border-b border-[#eee]">
            <div className="flex items-center border-r border-[#f0f0f0] pb-[5px] pl-[8px] tracking-[-0.400px]"><LockKeyhole size={15} strokeWidth={1.600} className="mr-[6px] mt-[5px]" />OBJECTID<SortDots /></div>
            {["施設ID", "都道府県名", "市区町村名"].map((h) => <div key={h} className="flex items-center border-r border-[#f0f0f0] pb-[5px] pl-[13px]">{h}<SortDots /></div>)}
            <div className="flex items-center whitespace-nowrap pb-[5px] pl-[13px]">施設区分</div>
          </div>
          {rows.map(([a, b, c]) => (
            <div key={a} className="grid h-[30px] grid-cols-[200px_200px_200px_200px_82px] border-b border-[#eee] leading-[25px]">
              {[a, b, "埼玉県", c, "映画館"].map((v, i) => <div key={i} className="border-r border-[#f0f0f0] pl-[8px] last:border-r-0">{v}</div>)}
            </div>
          ))}
        </div>
        <div className="flex h-[12px] items-center text-[#a5a5a5]">
          <svg width="7" height="9" className="ml-[8px]"><path d="M7 0v9L0 4.500z" fill="currentColor" /></svg>
          <div className="ml-[8px] h-[9px] w-[142px] rounded-full bg-[#a5a5a5]" />
          <svg width="7" height="9" className="ml-auto mr-[9px]"><path d="M0 0v9l7-4.500z" fill="currentColor" /></svg>
        </div>
      </div>
      <div className="flex w-[15px] flex-col items-center pr-[1px] pt-[8px] text-[#a5a5a5]">
        <svg width="9" height="7"><path d="M0 7h9L4.500 0z" fill="currentColor" /></svg>
        <div className="mt-[8px] h-[17px] w-[9px] rounded-full bg-[#a5a5a5]" />
        <svg width="9" height="7" className="mt-[157px]"><path d="M0 0h9L4.500 7z" fill="currentColor" /></svg>
      </div>
    </div>
    <div className="-ml-[14px] mt-px flex h-[15px] w-[117px] items-center whitespace-nowrap bg-[#f3f3f3] pb-[2px] pl-[5px] text-[12px]">合計: 2242 | 選択: 0</div>
  </div>
);

/* ---------- app preview ---------- */
const EsriBadge = () => (
  <div className="flex h-[36px] w-[142px] items-center whitespace-nowrap rounded-[3px] bg-white pl-[8px] text-[#2a2325]">
    <svg width="24" height="24" viewBox="0 0 24 24"><circle cx="12" cy="12" r="11.500" fill="#2a7ac0" /><path d="M3 8c4-6 9-6 10-4s-4 3-3 6-5 4-7 2zM13 11c4-3 9 0 9 3s-5 8-8 7 1-5-1-6-1-3 0-4zM3 15c3-1 5 2 6 5-3-1-5-2-6-5z" fill="#5bb53c" /><g fill="none" stroke="#222" strokeWidth=".8"><circle cx="12" cy="12" r="11.300" /><path d="M2 7c6 3 14 3 20 0M1 13c6 3 16 3 22 0M4 19c5 2 11 2 16 0M8 1c-4 7-4 15 0 22M16 1c4 7 4 15 0 22M12 .5v23" /></g></svg>
    <span className="mb-[3px] ml-[3px] font-['Noto_Sans'] text-[24px] font-bold leading-[30px] tracking-[-0.500px]">esri</span>
    <span className="ml-[3px] text-[15.500px] tracking-[-1.200px]">ジャパン</span>
  </div>
);
const Select = () => (
  <div className="flex h-8 w-[294px] items-center rounded-[2px] border border-[#bdbdbd] bg-white pb-[6px] pl-[8px] pr-[6px] text-[14px]">
    <span className="grow">0 が選択されています</span><ChevronDown size={12} strokeWidth={2} className="mt-[6px]" />
  </div>
);
const FilterCard = ({ title, children, className }) => (
  <div className={`border border-[#bdbdbd] bg-white text-[13px] text-[#1f1f1f] ${className}`}>
    <div className="flex h-[40px] items-center pl-[8px]">
      <svg width="9" height="7" className="mt-1"><path d="M0 .5h9L4.500 6.500z" fill="#111" /></svg>
      <Svg s={14} className="ml-[9px] mr-[8px] mt-1"><path d="M1 1.500h12L8.500 7v6.500L5.500 11V7z" /></Svg>
      <span className="grow">{title}</span>
      <div className="mr-[8px] mt-[3px] flex h-4 w-7 items-center justify-end rounded-full bg-[#076fe5] pr-[3px]"><span className="h-[10px] w-[10px] rounded-full bg-white" /></div>
    </div>
    <div className="pl-[24px]">{children}</div>
  </div>
);
const Field = ({ label }) => (
  <div className="mb-[5px]"><div className="h-[24px] leading-[26px]">{label}</div><Select /></div>
);

const leftError = ["Minified React error", "#130; visit", "https://reactjs.org/docs/e", "decoder.html?", "invariant=130&args[]=ob", "for the full message or", "use the non-minified dev", "environment for full"];
const rightError = ["Minified React", "error #130; visit", "https://reactjs.org/d", "decoder.html?", "invariant=130&args", "for the full", "message or use", "the non-minified", "dev environment", "for full errors and", "additional helpful", "warnings."];

const AppPreview = () => (
  <div className="h-[800px] w-[1280px] bg-white shadow-[0_0_12px_#000]">
    <div className="flex h-[72px] items-center bg-[#004da8] text-white">
      <div className="ml-2"><EsriBadge /></div>
      <h1 className="mb-[7px] ml-[4px] grow text-[24px] font-normal">集客施設閲覧アプリ</h1>
      <svg width="20" height="20" viewBox="0 0 20 20" fill="none" stroke="#fff" strokeWidth="1.300" className="mr-[38px]"><rect x=".8" y=".7" width="18.500" height="3.800" rx="1.500" /><rect x=".8" y="8" width="18.500" height="3.800" rx="1.500" /><rect x=".8" y="15.400" width="18.500" height="3.800" rx="1.500" /></svg>
    </div>
    <div className="flex h-[728px]">
      <div className="relative w-[346px] border border-b-0 border-dashed border-[#aaa] bg-[#efefef]">
        <div className="h-[55px] bg-white pl-[108px]">
          <svg width="130" height="25" viewBox="0 1 130 25"><circle cx="64.500" cy="-68.500" r="93.500" fill="#5f8fd2" /><path d="M0 0H13L9 9L0 9z" fill="#fff" /><path d="M1.500 0L8.500 8.500L14 0z" fill="#78b885" /><path d="M8.500 8.500L14 0" stroke="#fff" /></svg>
        </div>
        <FilterCard title="地方自治体による絞込" className="mt-[9px] h-[177px]">
          <Field label="都道府県名 次のいずれかである" /><Field label="市区町村名 次のいずれかである" />
        </FilterCard>
        <FilterCard title="施設区分による絞込" className="mt-[8px] h-[116px]"><Field label="施設区分 次のいずれかである" /></FilterCard>
        <div className="h-[10px] bg-[#d4d4d4]" />
        <div className="h-[351px] overflow-hidden border border-t-2 border-[#00a5b5] bg-[#efefef] font-['Lato'] text-[30px] leading-[45px] tracking-[0.550px] text-black">
          <div className="-ml-px -mt-[3px]">{leftError.map((l) => <div key={l} className="whitespace-nowrap">{l}</div>)}</div>
        </div>
        <div className="absolute left-0 top-[339px] flex h-8 w-24 items-center bg-[#282828] pl-[8px] text-white shadow-md">
          <Svg s={16}><path d="M3.500 11.500H1.500V1.500h10v2" /><rect x="4.500" y="4.500" width="10" height="10.500" /></Svg>
          <Svg s={18} className="ml-[15px]"><path d="M8 15.500H2.500V1.500h11v7M5 5h6M5 8h3" /><circle cx="13" cy="13" r="3.500" /><path d="M9.500 16.500l7-7" /></Svg>
          <Svg s={17} className="ml-[14px]"><path d="M1 4h15M5.500 4V1.500h6V4M3 4l1 12h9l1-12M7 7v6.500M10 7v6.500" /></Svg>
        </div>
        <div className="absolute bottom-[3px] left-[164px] h-[4px] w-[16px] border border-black bg-white" />
        <div className="absolute -left-[4px] top-[368px] h-[367px] w-[352px] rounded-[6px] border-2 border-[#f50000] shadow-[0_1px_3px_#0008]" />
      </div>
      <div className="w-[934px] outline-1 -outline-offset-1 outline-dashed outline-[#aaa]"><MapView /><DataTable /></div>
    </div>
  </div>
);

const Canvas = () => (
  <main className="flex w-[1300px] shrink-0 flex-col bg-[#181818]">
    <div className="h-[996px] pl-[20px] pt-[29px]"><AppPreview /></div>
    <div className="flex h-[12px] items-center pb-px text-[#555]">
      <svg width="5" height="7" className="ml-[5px]"><path d="M5 0v7L0 3.500z" fill="currentColor" /></svg>
      <div className="ml-[8px] h-[6px] w-[1243px] rounded-full bg-[#4d4d4d]" />
      <svg width="5" height="7" className="ml-auto mr-[5px]"><path d="M0 0v7l5-3.500z" fill="currentColor" /></svg>
    </div>
  </main>
);

/* ---------- settings panel ---------- */
const Settings = () => (
  <aside className="relative z-10 w-[261px] shrink-0 border-l border-[#6a6a6a] bg-[#282828]">
    <div className="flex h-[60px] items-center pb-[2px] pl-4 pr-[19px] text-[#c5c5c5]">
      <div className="flex h-[26px] w-[26px] items-center justify-center border border-[#6a6a6a]"><svg width="17" height="17" viewBox="0 0 20 20" fill="none" stroke="currentColor" strokeWidth="1.200"><rect x="1.500" y="1" width="18" height="18" /><Hand /></svg></div>
      <div className="mb-px ml-[11px] grow text-[16px] tracking-[0.300px]">ServiceAreaFilter</div>
      <CircleHelp size={17} strokeWidth={1.300} />
    </div>
    <div className="flex h-[28px] whitespace-nowrap text-center text-[14px] leading-[22px] text-[#b0b0b0]">
      <div className="w-[87px] border-b-2 border-[#00a0b0] text-white">コンテンツ</div>
      <div className="w-[86px] border-b border-[#6a6a6a]">スタイル</div>
      <div className="w-[87px] border-b border-[#6a6a6a]">アクション</div>
    </div>
    <div className="-mt-px overflow-hidden font-['Lato'] text-[30px] leading-[45px] tracking-[0.600px] text-[#f0f0f0]">
      {rightError.map((l) => <div key={l} className="whitespace-nowrap">{l}</div>)}
    </div>
    <div className="absolute -left-[9px] top-[83px] h-[557px] w-[264px] rounded-[6px] border-2 border-[#e00000] shadow-[0_1px_3px_#0008]" />
  </aside>
);

/* ---------- status bar ---------- */
const StatusBar = () => (
  <footer className="flex h-[20px] shrink-0 items-center whitespace-nowrap border-t border-[#6a6a6a] bg-[#444444] text-[13px] leading-[17px] text-[#c5c5c5]">
    <div className="mb-[2px] ml-[15px] w-[49px] text-white">ページ:</div>
    <div className="mb-[2px] w-[43px]">ページ</div><ChevronDown size={12} strokeWidth={1.800} />
    <div className="mb-[2px] ml-[31px] w-[71px]">サイドバー</div><ChevronRight size={14} strokeWidth={1.800} />
    <div className="mb-[2px] ml-[3px] w-[18px]">列</div><ChevronRight size={14} strokeWidth={1.800} />
    <div className="mb-[2px] ml-[3px] tracking-[0.200px]">ServiceAreaFilter</div>
    <div className="ml-auto w-[42px]">A11Y</div>
    <Minus size={16} strokeWidth={1.500} />
    <div className="ml-[7px] h-[2px] w-[59px] bg-[#d0d0d0]" />
    <div className="h-[12px] w-[12px] rounded-full border-2 border-[#d0d0d0] bg-[#282828]" />
    <div className="mr-[7px] h-[2px] w-[58px] bg-gradient-to-r from-[#777] to-[#505050]" />
    <Plus size={16} strokeWidth={1.500} />
    <div className="mb-[2px] ml-[13px] w-[39px]">100%</div><ChevronDown size={12} strokeWidth={1.800} />
    <Svg s={13} className="ml-[11px] text-[#b0b0b0]"><path d="M.5.500h12v12H.5z" /><path d="M6.500 1v3M6.500 9v3M1 6.500h3M9 6.500h3" /></Svg>
    <Svg s={13} className="ml-[9px] text-[#b0b0b0]"><path d="M.5 4V.5h12V4M.5 9v3.500h12V9" /><path d="M.5 6.500h4.500M8 6.500h4.500M3 4.800v3.500M10 4.800v3.500" /></Svg>
    <div className="ml-[20px] mr-[8px] flex h-full w-[30px] items-center justify-center bg-[#5f5f5f] text-white"><Svg s={12}><rect x=".5" y=".5" width="11" height="11" /><path d="M9.500 0v12" strokeWidth="4" /></Svg></div>
  </footer>
);

export default function App() {
  return (
    <div className="h-[1078px] w-[1872px] overflow-hidden bg-white font-['Lato','Noto_Sans_CJK_JP',sans-serif]">
      <div className="flex h-full w-full flex-col overflow-hidden rounded-[8px] bg-[#181818]">
        <TopBar />
        <div className="flex h-[1008px] shrink-0">
          <Rail /><WidgetPanel /><Canvas /><Settings />
        </div>
        <StatusBar />
      </div>
    </div>
  );
}
